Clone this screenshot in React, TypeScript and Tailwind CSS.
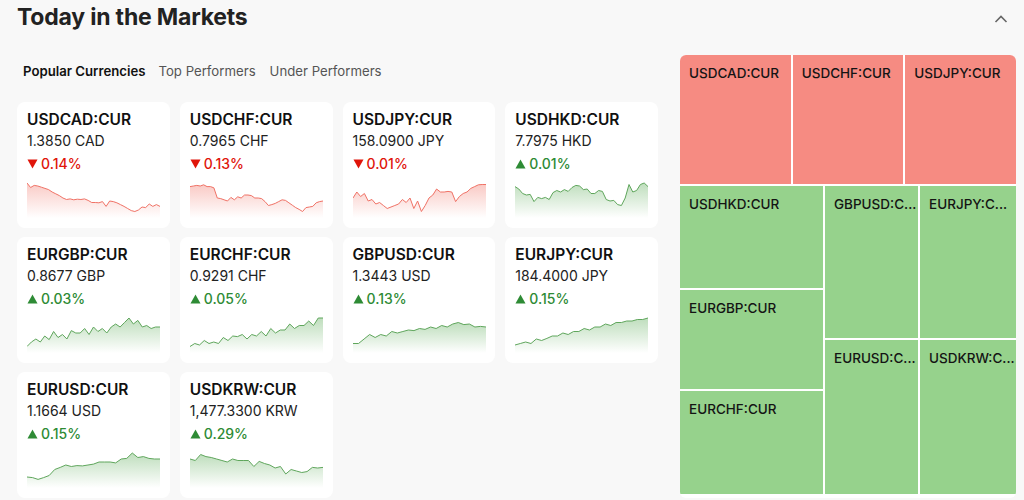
import React from "react";

type Item = { t: string; p: string; c: string; up: boolean; d: number[] };

const items: Item[] = [
  { t: "USDCAD:CUR", p: "1.3850 CAD", c: "0.14%", up: false, d: [0.0,0.15,0.08,0.1,0.14,0.18,0.22,0.3,0.36,0.42,0.5,0.55,0.53,0.56,0.54,0.55,0.53,0.58,0.65,0.65,0.66,0.62,0.78,0.6,0.62,0.66,0.72,0.78,0.85,0.92,0.95,0.9,0.8,0.82,0.7,0.78,0.72,0.78] },
  { t: "USDCHF:CUR", p: "0.7965 CHF", c: "0.13%", up: false, d: [0.12,0.1,0.08,0.1,0.06,0.12,0.12,0.16,0.5,0.52,0.56,0.6,0.48,0.56,0.46,0.5,0.4,0.4,0.42,0.5,0.5,0.52,0.62,0.75,0.72,0.68,0.62,0.56,0.58,0.66,0.74,0.82,0.88,0.95,0.82,0.8,0.78,0.66,0.62,0.6] },
  { t: "USDJPY:CUR", p: "158.0900 JPY", c: "0.01%", up: false, d: [0.5,0.3,0.45,0.35,0.6,0.55,0.7,0.65,0.75,0.85,0.8,0.75,0.7,0.55,0.65,0.5,0.85,0.6,0.95,0.75,0.5,0.4,0.2,0.3,0.3,0.28,0.3,0.62,0.45,0.35,0.3,0.18,0.12,0.06,0.05,0.05] },
  { t: "USDHKD:CUR", p: "7.7975 HKD", c: "0.01%", up: true, d: [0.12,0.2,0.35,0.4,0.38,0.62,0.48,0.52,0.48,0.55,0.32,0.25,0.3,0.22,0.28,0.15,0.08,0.1,0.22,0.2,0.35,0.35,0.25,0.28,0.55,0.6,0.58,0.72,0.75,0.5,0.05,0.3,0.25,0.05,0.0,0.12] },
  { t: "EURGBP:CUR", p: "0.8677 GBP", c: "0.03%", up: true, d: [0.95,0.8,0.7,0.8,0.6,0.72,0.45,0.65,0.55,0.7,0.42,0.5,0.5,0.35,0.55,0.3,0.45,0.35,0.5,0.3,0.2,0.3,0.15,0.0,0.2,0.08,0.3,0.25,0.35,0.3,0.3] },
  { t: "EURCHF:CUR", p: "0.9291 CHF", c: "0.05%", up: true, d: [0.95,0.85,0.9,0.75,0.85,0.8,0.85,0.65,0.75,0.6,0.62,0.55,0.7,0.55,0.6,0.45,0.6,0.35,0.5,0.4,0.4,0.2,0.35,0.25,0.25,0.1,0.25,0.0,0.0] },
  { t: "GBPUSD:CUR", p: "1.3443 USD", c: "0.13%", up: true, d: [0.85,0.85,0.7,0.55,0.65,0.55,0.6,0.45,0.5,0.45,0.4,0.42,0.35,0.38,0.3,0.35,0.25,0.3,0.2,0.15,0.22,0.2,0.3,0.28,0.3] },
  { t: "EURJPY:CUR", p: "184.4000 JPY", c: "0.15%", up: true, d: [0.9,0.85,0.8,0.85,0.7,0.75,0.68,0.6,0.6,0.5,0.55,0.45,0.45,0.35,0.4,0.3,0.3,0.2,0.25,0.15,0.15,0.1,0.1,0.05,0.05,0.0] },
  { t: "EURUSD:CUR", p: "1.1664 USD", c: "0.15%", up: true, d: [0.8,0.82,0.88,0.82,0.75,0.55,0.48,0.4,0.45,0.42,0.43,0.4,0.37,0.3,0.3,0.3,0.33,0.2,0.18,0.0,0.15,0.12,0.18,0.2,0.2] },
  { t: "USDKRW:CUR", p: "1,477.3300 KRW", c: "0.29%", up: true, d: [0.2,0.25,0.05,0.12,0.15,0.2,0.25,0.3,0.2,0.25,0.25,0.25,0.45,0.28,0.35,0.4,0.5,0.45,0.7,0.55,0.6,0.65,0.62,0.48,0.5,0.48] },
];

function Spark({ d, up }: { d: number[]; up: boolean }) {
  const W = 133;
  const H = 36;
  const top = 1;
  const h = 30;
  const pts = d.map((v, i) => [(i / (d.length - 1)) * W, top + v * h]);
  const line = pts.map((p, i) => `${i ? "L" : "M"}${p[0].toFixed(2)},${p[1].toFixed(2)}`).join(" ");
  const area = `${line} L${W},${H} L0,${H} Z`;
  const col = up ? "#5fa65c" : "#f07266";
  const id = (up ? "g" : "r") + d.length + String(d[0]).replace(".", "_");
  return (
    <svg width={W} height={H} viewBox={`0 0 ${W} ${H}`} className="block">
      <defs>
        <linearGradient id={id} x1="0" y1="0" x2="0" y2="1">
          <stop offset="0" stopColor={up ? "#6fb56b" : "#f38a7f"} stopOpacity="0.45" />
          <stop offset="1" stopColor={up ? "#6fb56b" : "#f38a7f"} stopOpacity="0" />
        </linearGradient>
      </defs>
      <path d={area} fill={`url(#${id})`} />
      <path d={line} fill="none" stroke={col} strokeWidth="1" strokeLinejoin="round" />
    </svg>
  );
}

function Tri({ up }: { up: boolean }) {
  return up ? (
    <svg width="11" height="10" viewBox="0 0 11 10" className="mr-[3px]">
      <polygon points="5.5,0.5 10.5,9.5 0.5,9.5" fill="#2e8b35" />
    </svg>
  ) : (
    <svg width="11" height="10" viewBox="0 0 11 10" className="mr-[3px]">
      <polygon points="0.5,0.5 10.5,0.5 5.5,9.5" fill="#e0150a" />
    </svg>
  );
}

function Card({ it }: { it: Item }) {
  return (
    <div className="bg-white rounded-lg h-[126px] pl-[10px] pt-[8px]">
      <div className="text-[15.5px] leading-[20px] font-semibold text-[#111]">{it.t}</div>
      <div className="text-[14px] leading-[18px] mt-[2px] text-[#222]">{it.p}</div>
      <div className={`flex items-center text-[14px] leading-[18px] mt-[5px] font-medium ${it.up ? "text-[#2e8b35]" : "text-[#e0150a]"}`}>
        <Tri up={it.up} />
        {it.c}
      </div>
      <div className="mt-[9px]">
        <Spark d={it.d} up={it.up} />
      </div>
    </div>
  );
}

function Cell({ label, red, h, cls = "" }: { label: string; red?: boolean; h: number; cls?: string }) {
  return (
    <div
      className={`${red ? "bg-[#f68b82]" : "bg-[#96d28c]"} pl-[9px] pt-[10px] min-w-0 ${cls}`}
      style={{ height: h }}
    >
      <div className="whitespace-nowrap text-[13.5px] leading-[16px] font-medium text-[#141414]">{label}</div>
    </div>
  );
}

export default function App() {
  return (
    <div className="w-[1024px] h-[500px] bg-[#f8f8f8] overflow-hidden" style={{ fontFamily: "Inter, 'Noto Sans', sans-serif" }}>
      <div className="flex items-start justify-between pl-[17px] pr-[16px] pt-[2px]">
        <h1 className="text-[23px] leading-[30px] font-bold text-[#222] tracking-[-0.2px]">Today in the Markets</h1>
        <svg width="14" height="10" viewBox="0 0 14 10" className="mt-[12px]">
          <polyline points="1.5,8 7,2.5 12.5,8" fill="none" stroke="#666" strokeWidth="1.6" />
        </svg>
      </div>
      <div className="flex pl-[17px] pr-[8px]">
        <div className="w-[641px] shrink-0">
          <div className="flex items-center gap-[13px] pl-[6px] mt-[30px] h-[20px] text-[13.2px]">
            <span className="font-semibold text-[#111]">Popular Currencies</span>
            <span className="text-[#555]">Top Performers</span>
            <span className="text-[#555] ml-[1px]">Under Performers</span>
          </div>
          <div className="grid grid-cols-4 gap-x-[10px] gap-y-[9px] mt-[20px]">
            {items.map((it) => (
              <Card key={it.t} it={it} />
            ))}
          </div>
        </div>
        <div className="ml-[22px] mt-[23px] w-[336px] shrink-0 rounded-md overflow-hidden bg-white flex flex-col gap-[2px]">
          <div className="flex gap-[2px]">
            <Cell label="USDCAD:CUR" red h={129} cls="flex-1" />
            <Cell label="USDCHF:CUR" red h={129} cls="flex-1" />
            <Cell label="USDJPY:CUR" red h={129} cls="flex-1" />
          </div>
          <div className="flex gap-[2px]">
            <div className="w-[143px] shrink-0 flex flex-col gap-[2px]">
              <Cell label="USDHKD:CUR" h={102} />
              <Cell label="EURGBP:CUR" h={99} />
              <Cell label="EURCHF:CUR" h={103} />
            </div>
            <div className="w-[93px] shrink-0 flex flex-col gap-[2px]">
              <Cell label="GBPUSD:C..." h={152} cls="pl-[8px]" />
              <Cell label="EURUSD:C..." h={154} cls="pl-[8px]" />
            </div>
            <div className="w-[96px] shrink-0 flex flex-col gap-[2px]">
              <Cell label="EURJPY:C..." h={152} cls="pl-[8px]" />
              <Cell label="USDKRW:C..." h={154} cls="pl-[8px]" />
            </div>
          </div>
        </div>
      </div>
    </div>
  );
}
